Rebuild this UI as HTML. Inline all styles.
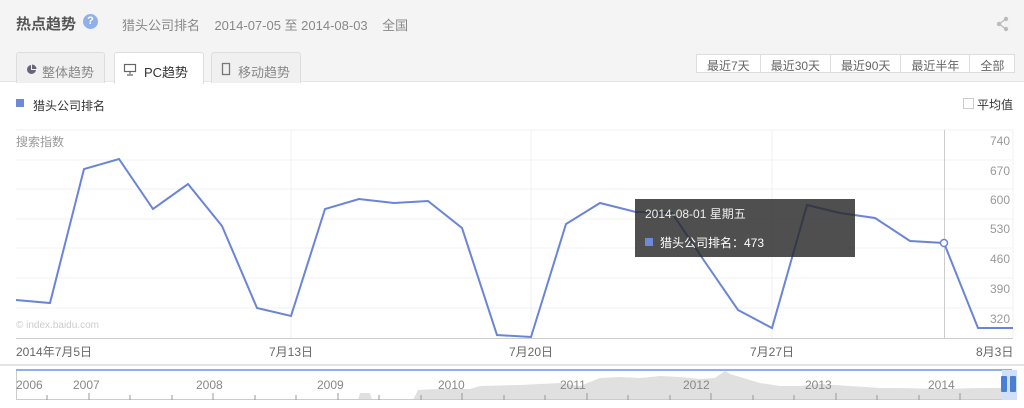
<!DOCTYPE html>
<html><head><meta charset="utf-8"><style>
*{margin:0;padding:0;box-sizing:border-box}
body{width:1024px;height:408px;overflow:hidden;background:#fff;font-family:"Liberation Sans","Noto Sans CJK SC",sans-serif;font-size:12px;color:#666;position:relative}
.hd{position:absolute;left:0;top:0;width:1024px;height:82px;background:#f4f4f4;border-bottom:1px solid #e6e6e6}
.abs{position:absolute;white-space:nowrap}
.tab{position:absolute;top:52px;height:31px;border:1px solid #ddd;border-bottom:none;border-radius:3px 3px 0 0;background:#f0f0f0;font-size:13px;color:#888;padding:0}
.tab span{top:7px}
.btns{position:absolute;left:696px;top:54px;height:19px;display:flex;border:1px solid #ddd;background:#fff}
.btns div{font-size:12px;color:#666;padding:2px 10px 0;border-left:1px solid #ddd;height:17px}
.btns div:first-child{border-left:none}
</style></head><body>
<div class="hd"></div>
<div class="abs" style="left:16px;top:13px;font-size:15px;font-weight:bold;color:#555">热点趋势</div>
<div class="abs" style="left:83px;top:14px;width:15px;height:15px;border-radius:50%;background:#8fb0e8;color:#fff;font-size:11px;font-weight:bold;text-align:center;line-height:15px">?</div>
<div class="abs" style="left:122px;top:15px;font-size:13px;color:#888">猎头公司排名&nbsp;&nbsp;&nbsp;&nbsp;2014-07-05 至 2014-08-03&nbsp;&nbsp;&nbsp;&nbsp;全国</div>
<svg class="abs" style="left:996px;top:16px" width="14" height="16" viewBox="0 0 14 16"><circle cx="10" cy="3" r="2.2" fill="#bbb"/><circle cx="3" cy="8" r="2.2" fill="#bbb"/><circle cx="10" cy="13" r="2.2" fill="#bbb"/><path d="M10 3L3 8L10 13" stroke="#bbb" stroke-width="1.3" fill="none"/></svg>
<div class="tab" style="left:16px;width:89px"><svg style="position:absolute;left:9px;top:11px" width="11" height="11" viewBox="0 0 11 11"><path d="M5 1A4.5 4.5 0 1 0 10 6H5Z" fill="#667"/><path d="M6 0.5A4.5 4.5 0 0 1 10.5 5H6Z" fill="#667"/></svg><span style="position:absolute;left:25px;top:9px">整体趋势</span></div>
<div class="tab" style="left:114px;width:90px;background:#fff;height:32px;color:#333"><svg style="position:absolute;left:8px;top:10px" width="14" height="13" viewBox="0 0 14 13"><rect x="1.5" y="1.5" width="11" height="7" fill="none" stroke="#666" stroke-width="1.2"/><path d="M7 9v2M4 12h6" stroke="#666" stroke-width="1.2"/></svg><span style="position:absolute;left:29px;top:9px">PC趋势</span></div>
<div class="tab" style="left:211px;width:90px"><svg style="position:absolute;left:9px;top:9px" width="10" height="14" viewBox="0 0 10 14"><rect x="1.5" y="1.5" width="7" height="11" fill="none" stroke="#777" stroke-width="1.3"/></svg><span style="position:absolute;left:26px;top:9px">移动趋势</span></div>
<div class="btns"><div>最近7天</div><div>最近30天</div><div>最近90天</div><div>最近半年</div><div>全部</div></div>
<div class="abs" style="left:16px;top:99px;width:8px;height:8px;background:#7088d8"></div>
<div class="abs" style="left:33px;top:97px;color:#333">猎头公司排名</div>
<div class="abs" style="left:963px;top:98px;width:11px;height:11px;border:1px solid #ccc"></div>
<div class="abs" style="left:977px;top:96px;color:#333">平均值</div>
<div class="abs" style="left:16px;top:133px;color:#999">搜索指数</div>
<svg class="abs" style="left:0;top:0" width="1024" height="408">
<g stroke="#f0f0f0" stroke-width="1">
<line x1="16" y1="130" x2="1013" y2="130"/><line x1="16" y1="160" x2="1013" y2="160"/><line x1="16" y1="189" x2="1013" y2="189"/><line x1="16" y1="219" x2="1013" y2="219"/><line x1="16" y1="248" x2="1013" y2="248"/><line x1="16" y1="278" x2="1013" y2="278"/><line x1="16" y1="308" x2="1013" y2="308"/>
<line x1="291" y1="130" x2="291" y2="338"/><line x1="531" y1="130" x2="531" y2="338"/><line x1="772" y1="130" x2="772" y2="338"/><line x1="1013" y1="130" x2="1013" y2="338"/>
</g>
<line x1="944.5" y1="130" x2="944.5" y2="338" stroke="#ccc"/>
<line x1="16" y1="338.5" x2="1013" y2="338.5" stroke="#ccc"/>
<g fill="#999" font-size="12" text-anchor="end"><text x="1010" y="145">740</text><text x="1010" y="175">670</text><text x="1010" y="204">600</text><text x="1010" y="233">530</text><text x="1010" y="263">460</text><text x="1010" y="293">390</text><text x="1010" y="323">320</text></g>
<text x="16" y="328" fill="#ccc" font-size="10">© index.baidu.com</text>
<polyline fill="none" stroke="#6a84d8" stroke-width="2" points="16,300 50,303 84,169 119,159 153,209 188,184 222,226 257,308 291,316 325,209 359,199 394,203 428,201 462,228 497,335 531,337 566,224 600,203 636,212 672,213 705,262 738,310 772,328 807,205 840,213 875,218 910,241 944,243 978,328 1013,328"/>
<circle cx="944" cy="243" r="3.5" fill="#fff" stroke="#6a84d8" stroke-width="1.5"/>
<g fill="#666" font-size="12"><text x="16" y="356">2014年7月5日</text><text x="269" y="356">7月13日</text><text x="509" y="356">7月20日</text><text x="750" y="356">7月27日</text><text x="976" y="356">8月3日</text></g>
<line x1="0" y1="365" x2="1024" y2="365" stroke="#e4e4e4" stroke-width="2"/>
<path d="M358 400 L360 393 L370 393 L372 400 Z M413 400 L418 390 L440 389 L470 389 L480 386 L520 385 L560 383 L580 386 L600 378 L620 377 L640 378 L660 376 L680 377 L700 379 L715 378 L725 371 L730 374 L740 377 L760 383 L780 386 L800 386 L820 384 L850 386 L880 388 L900 388 L940 389 L980 388 L1000 388 L1012 386 L1012 400 Z" fill="#e0e0e0"/>
<rect x="16.5" y="369.5" width="995" height="30" fill="none" stroke="#ccc"/>
<line x1="16" y1="370" x2="1012" y2="370" stroke="#8fb0e8" stroke-width="2"/>
<g stroke="#999"><line x1="47" y1="395" x2="47" y2="400"/><line x1="89" y1="393" x2="89" y2="400"/><line x1="130" y1="395" x2="130" y2="400"/><line x1="172" y1="395" x2="172" y2="400"/><line x1="213" y1="393" x2="213" y2="400"/><line x1="255" y1="395" x2="255" y2="400"/><line x1="296" y1="395" x2="296" y2="400"/><line x1="338" y1="393" x2="338" y2="400"/><line x1="379" y1="395" x2="379" y2="400"/><line x1="421" y1="395" x2="421" y2="400"/><line x1="462" y1="393" x2="462" y2="400"/><line x1="504" y1="395" x2="504" y2="400"/><line x1="545" y1="395" x2="545" y2="400"/><line x1="587" y1="393" x2="587" y2="400"/><line x1="628" y1="395" x2="628" y2="400"/><line x1="670" y1="395" x2="670" y2="400"/><line x1="711" y1="393" x2="711" y2="400"/><line x1="753" y1="395" x2="753" y2="400"/><line x1="794" y1="395" x2="794" y2="400"/><line x1="836" y1="393" x2="836" y2="400"/><line x1="877" y1="395" x2="877" y2="400"/><line x1="919" y1="395" x2="919" y2="400"/><line x1="960" y1="393" x2="960" y2="400"/></g>
<g fill="#888" font-size="12"><text x="16" y="389">2006</text><text x="73" y="389">2007</text><text x="196" y="389">2008</text><text x="317" y="389">2009</text><text x="438" y="389">2010</text><text x="560" y="389">2011</text><text x="683" y="389">2012</text><text x="805" y="389">2013</text><text x="928" y="389">2014</text></g>
<rect x="1002" y="370" width="15" height="30" fill="#cfe0f8"/>
<rect x="1001" y="376" width="6" height="16" rx="1" fill="#4a7fd8"/><rect x="1010" y="376" width="6" height="16" rx="1" fill="#4a7fd8"/>
<rect x="635" y="199" width="220" height="58" fill="rgba(40,40,40,0.82)"/>
<text x="645" y="218" fill="#eee" font-size="12">2014-08-01 星期五</text>
<rect x="645" y="238" width="8" height="8" fill="#7088d8"/>
<text x="660" y="247" fill="#fff" font-size="12">猎头公司排名：473</text>
</svg>
</body></html>
